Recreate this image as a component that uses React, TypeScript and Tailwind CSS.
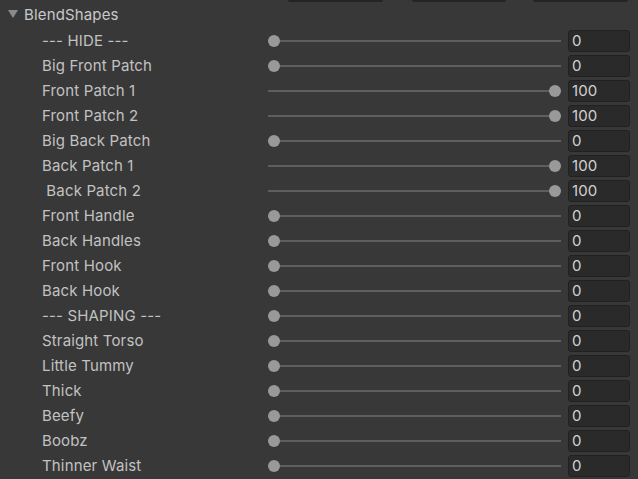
const ROWS: [string, number][] = [
  ['--- HIDE ---', 0],
  ['Big Front Patch', 0],
  ['Front Patch 1', 100],
  ['Front Patch 2', 100],
  ['Big Back Patch', 0],
  ['Back Patch 1', 100],
  [' Back Patch 2', 100],
  ['Front Handle', 0],
  ['Back Handles', 0],
  ['Front Hook', 0],
  ['Back Hook', 0],
  ['--- SHAPING ---', 0],
  ['Straight Torso', 0],
  ['Little Tummy', 0],
  ['Thick', 0],
  ['Beefy', 0],
  ['Boobz', 0],
  ['Thinner Waist', 0],
]

function Slider({ value }: { value: number }) {
  // thumb travels 6px in from each end of the track
  const left = 6 + (value / 100) * 281
  return (
    <div className="relative h-[12px] w-[293px]">
      <div className="absolute left-0 right-0 top-[5px] h-[2px] bg-[#5e5e5e]" />
      <div
        className="absolute top-0 h-[12px] w-[12px] -translate-x-1/2 rounded-full bg-[#999999]"
        style={{ left }}
      />
    </div>
  )
}

export default function App() {
  return (
    <div
      className="h-[479px] w-[638px] overflow-hidden bg-[#383838] text-[15px] tracking-[0.15px] text-[#c2c2c2]"
      style={{ fontFamily: 'Inter, "Noto Sans", sans-serif' }}
    >
      {/* bottoms of the toolbar buttons above */}
      <div className="flex h-[2px]">
        <div className="ml-[288px] w-[95px] rounded-b-[2px] bg-[#242424]" />
        <div className="ml-[29px] w-[94px] rounded-b-[2px] bg-[#242424]" />
        <div className="ml-[27px] w-[95px] rounded-b-[2px] bg-[#242424]" />
      </div>

      <div className="flex h-[26px] items-center">
        <svg width="10" height="8" viewBox="0 0 10 8" className="ml-[8px] mb-[2px]">
          <path d="M0 0 L10 0 L5 8 Z" fill="#8a8a8a" />
        </svg>
        <span className="ml-[6px] text-[#c8c8c8]">BlendShapes</span>
      </div>

      {ROWS.map(([label, value], i) => (
        <div key={i} className="flex h-[25px] items-center">
          <div className="w-[268px] whitespace-pre pl-[42px] pt-[1px]">{label}</div>
          <Slider value={value} />
          <div className="ml-[7px] flex h-[22px] w-[62px] items-center rounded-[3px] border border-[#212121] bg-[#2a2a2a] pl-[3px] pt-[1px] text-[#d2d2d2]">
            {value}
          </div>
        </div>
      ))}
    </div>
  )
}
